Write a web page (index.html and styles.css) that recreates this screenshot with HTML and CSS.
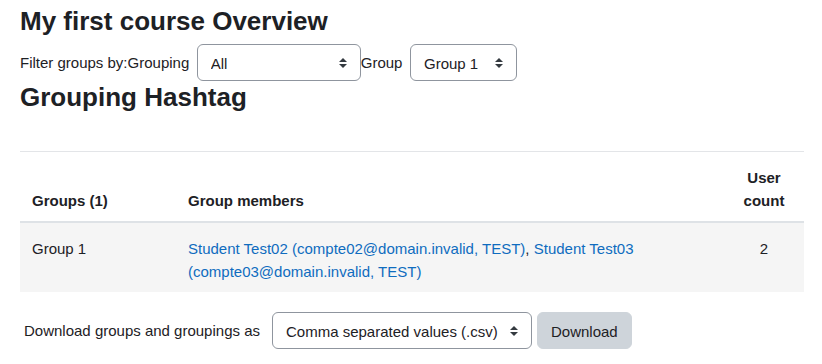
FILE: index.html
```html
<!DOCTYPE html>
<html lang="en">
<head>
<meta charset="utf-8">
<title>My first course Overview</title>
<link rel="stylesheet" href="styles.css">
</head>
<body>
<div class="page">
  <h2 class="title">My first course Overview</h2>
  <form class="filter-row">
    <span class="label">Filter groups by:</span>
    <span class="label label-gap">Grouping</span>
    <span class="select-wrap sel-all">
      <select class="select"><option>All</option></select>
      <svg class="arrow" viewBox="0 0 4 5" width="8" height="10"><path d="M2 0L0 2h4zm0 5L0 3h4z" fill="#343a40"/></svg>
    </span>
    <span class="label label-gap">Group</span>
    <span class="select-wrap sel-group">
      <select class="select"><option>Group 1</option></select>
      <svg class="arrow" viewBox="0 0 4 5" width="8" height="10"><path d="M2 0L0 2h4zm0 5L0 3h4z" fill="#343a40"/></svg>
    </span>
  </form>
  <h3 class="subtitle">Grouping Hashtag</h3>
  <hr class="rule">
  <table class="groups">
    <thead>
      <tr>
        <th class="col-groups">Groups (1)</th>
        <th class="col-members">Group members</th>
        <th class="col-count">User count</th>
      </tr>
    </thead>
    <tbody>
      <tr>
        <td class="col-groups">Group 1</td>
        <td class="col-members"><a href="#">Student Test02 (compte02@domain.invalid, TEST)</a>, <a href="#">Student Test03 (compte03@domain.invalid, TEST)</a></td>
        <td class="col-count">2</td>
      </tr>
    </tbody>
  </table>
  <form class="download-row">
    <span class="label dl-label">Download groups and groupings as</span>
    <span class="select-wrap sel-format">
      <select class="select"><option>Comma separated values (.csv)</option></select>
      <svg class="arrow" viewBox="0 0 4 5" width="8" height="10"><path d="M2 0L0 2h4zm0 5L0 3h4z" fill="#343a40"/></svg>
    </span>
    <button type="button" class="btn">Download</button>
  </form>
</div>
</body>
</html>
```
FILE: styles.css
```css
html, body {
  margin: 0;
  padding: 0;
  background: #fff;
}
body {
  font-family: "Liberation Sans", Arial, sans-serif;
  font-size: 15px;
  line-height: 1.5;
  color: #1d2125;
}
.page {
  padding: 6px 18px 0 20px;
}
.title, .subtitle {
  margin: 0;
  font-size: 26px;
  font-weight: bold;
  line-height: 30px;
}
.filter-row {
  display: flex;
  align-items: center;
  margin-top: 8px;
  height: 37px;
}
.label {
  padding-top: 2px;
}
.label-gap {
  margin-right: 7.5px;
}
.select-wrap {
  position: relative;
  display: inline-block;
}
.select {
  appearance: none;
  -webkit-appearance: none;
  box-sizing: border-box;
  height: 37px;
  width: 100%;
  margin: 0;
  padding: 2px 28px 0 13px;
  font-family: inherit;
  font-size: 15px;
  color: #1d2125;
  background: #fff;
  border: 1px solid #8f959e;
  border-radius: 6px;
}
.arrow {
  position: absolute;
  right: 14px;
  top: 50%;
  margin-top: -5px;
  pointer-events: none;
}
.sel-all { width: 164px; }
.sel-group { width: 107px; }
.sel-format { width: 260px; }
.subtitle {
  margin-top: 1px;
}
.rule {
  margin: 39px 0 0 0;
  border: 0;
  border-top: 1px solid #e3e5e8;
  height: 0;
}
.groups {
  width: 100%;
  border-collapse: collapse;
}
.groups th, .groups td {
  padding: 15px 12px 9px 12px;
  text-align: left;
  line-height: 22.5px;
}
.groups th {
  vertical-align: bottom;
  font-weight: bold;
  border-bottom: 2px solid #dee2e6;
}
.groups td {
  vertical-align: top;
  background: #f5f5f5;
}
.groups .col-groups { width: 132px; }
.groups .col-count { width: 56px; text-align: center; }
.groups a {
  color: #0f6cbf;
  text-decoration: none;
}
.download-row {
  display: flex;
  align-items: center;
  margin-top: 20px;
  padding-left: 4px;
}
.dl-label {
  margin-right: 12px;
}
.btn {
  box-sizing: border-box;
  height: 37px;
  margin-left: 5px;
  padding: 2px 13px 0 13px;
  font-family: inherit;
  font-size: 15px;
  color: #1d2125;
  background: #ced4da;
  border: 1px solid #ced4da;
  border-radius: 6px;
}
```
